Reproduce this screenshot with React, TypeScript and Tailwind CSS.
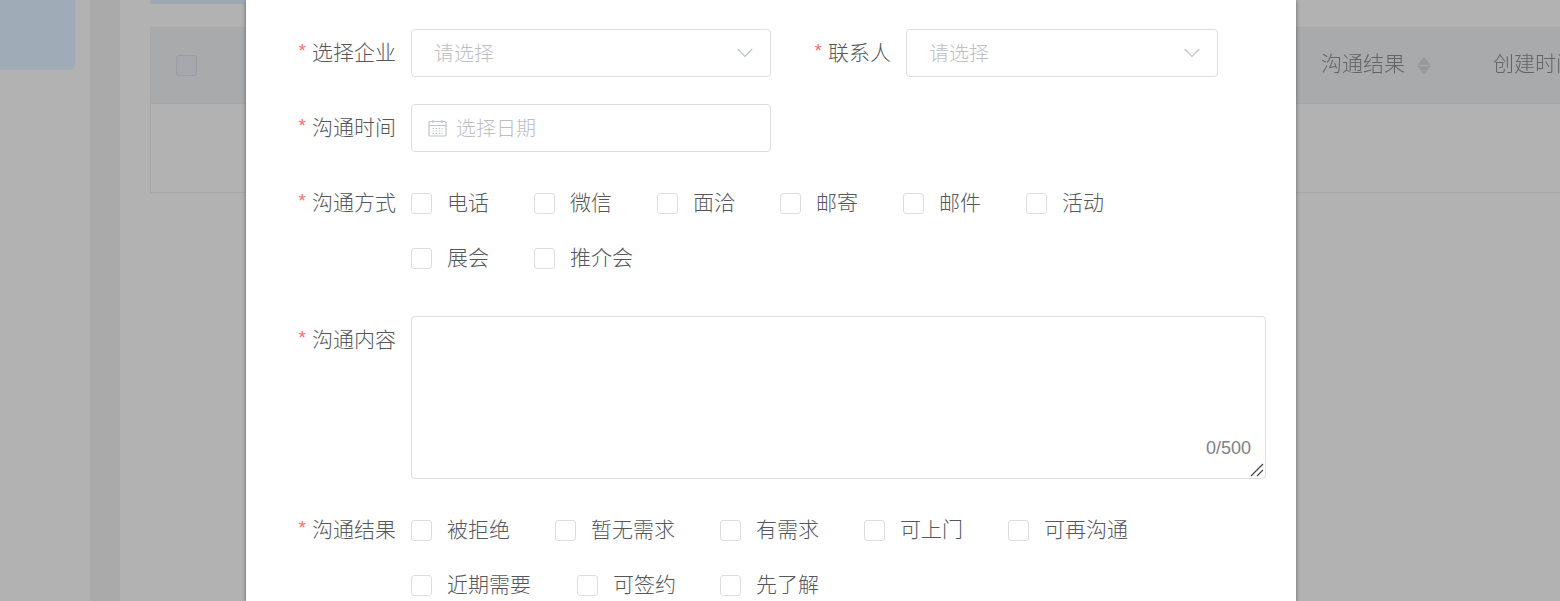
import React from "react";

const font = { fontFamily: '"Noto Sans CJK SC", "Noto Sans", sans-serif' };

const Label: React.FC<{ text: string; className?: string }> = ({ text, className }) => (
  <label className={`flex h-12 shrink-0 items-center justify-end pb-[3px] text-[21px] font-light text-[#55575b] ${className ?? "w-[150px]"}`}>
    <span className="mr-[6px] font-['Liberation_Sans',sans-serif] text-[19px] text-[#f56c6c]">*</span>
    {text}
  </label>
);

const Check: React.FC<{ text: string; width: number }> = ({ text, width }) => (
  <div className="flex h-[55px] items-center" style={{ width }}>
    <span className="h-[21px] w-[21px] shrink-0 rounded-[3px] border border-[#dcdde0] bg-white" />
    <span className="ml-[15px] pb-[4px] text-[21px] font-light whitespace-nowrap text-[#55575b]">{text}</span>
  </div>
);

const Select: React.FC<{ className: string }> = ({ className }) => (
  <div className={`flex h-12 items-center justify-between rounded-[4px] border border-[#dcdde0] bg-white pr-[17px] pl-[22px] ${className}`}>
    <span className="text-[20px] font-light text-[#bcbec2]">请选择</span>
    <svg width="16" height="10" viewBox="0 0 16 10" fill="none" stroke="#c0c4cc" strokeWidth="1.2">
      <path d="M.8 1l7.2 7.5L15.200 1" />
    </svg>
  </div>
);

const Background: React.FC = () => (
  <div className="-m-1 flex h-[609px] w-[1568px] overflow-hidden bg-[#b2b2b2] pt-1 pl-1 blur-[0.7px]">
    <div className="-mt-1 -ml-1 h-[74px] w-[79px] shrink-0 rounded-br-[5px] bg-[#a0abb8]" />
    <div className="-mt-1 ml-[15px] h-[609px] w-[30px] shrink-0 bg-[#aaaaaa]" />
    <div className="ml-[30px] flex w-[1444px] shrink-0 flex-col">
      <div className="-mt-1 h-[8px] w-[100px] bg-[#9fa9b6]" />
      <div className="mt-[23px] h-[166px] border border-r-0 border-[#a7a7a7]">
        <div className="flex h-[76px] items-center border-b border-[#a6a6a6] bg-[#a9aaac]">
          <span className="ml-[25px] h-[21px] w-[21px] shrink-0 rounded-[3px] border border-[#9a9ca3] bg-[#a6a8ae]" />
          <span className="ml-[1124px] flex shrink-0 items-center text-[21px] font-light whitespace-nowrap text-[#646466]">
            <span className="pb-[5px]">沟通结果</span>
            <span className="ml-[12px] flex flex-col gap-[1px]">
              <span className="h-0 w-0 border-x-[7px] border-b-[8px] border-x-transparent border-b-[#98999b]" />
              <span className="h-0 w-0 border-x-[7px] border-t-[8px] border-x-transparent border-t-[#98999b]" />
            </span>
          </span>
          <span className="ml-[62px] shrink-0 pb-[5px] text-[21px] font-light whitespace-nowrap text-[#646466]">创建时间</span>
        </div>
      </div>
    </div>
  </div>
);

const App: React.FC = () => (
  <div className="relative h-[601px] w-[1560px] overflow-hidden" style={font}>
    <Background />
    <div className="absolute top-0 left-[246px] h-[601px] w-[1050px] bg-white pt-[29px] shadow-[0_1px_4px_rgba(0,0,0,0.45)]">
      <div className="flex">
        <Label text="选择企业" />
        <Select className="ml-[15px] w-[360px]" />
        <Label text="联系人" className="ml-[43px] w-[77px]" />
        <Select className="ml-[15px] w-[312px]" />
      </div>
      <div className="mt-[27px] flex">
        <Label text="沟通时间" />
        <div className="ml-[15px] flex h-12 w-[360px] items-center rounded-[4px] border border-[#dcdde0] bg-white pl-[16px]">
          <svg width="19" height="18" viewBox="0 0 19 18" fill="none" stroke="#c0c4cc" strokeWidth="1.2">
            <rect x="1" y="2.500" width="17" height="14.500" rx="1" />
            <path d="M1 6.500h17M5 1v3M14 1v3" />
            <path d="M4.500 9.500h10M4.500 12h10M4.500 14.500h10" strokeDasharray="1.600 1.400" />
          </svg>
          <span className="ml-[9px] text-[20px] font-light text-[#bcbec2]">选择日期</span>
        </div>
      </div>
      <div className="mt-[24px] flex">
        <Label text="沟通方式" className="mt-[3px] w-[150px]" />
        <div className="ml-[15px] flex w-[855px] flex-wrap">
          {["电话", "微信", "面洽", "邮寄", "邮件", "活动"].map((t) => (
            <Check key={t} text={t} width={123} />
          ))}
          <Check text="展会" width={123} />
          <Check text="推介会" width={123} />
        </div>
      </div>
      <div className="mt-[30px] flex">
        <Label text="沟通内容" />
        <div className="relative ml-[15px] h-[163px] w-[855px] rounded-[4px] border border-[#dcdde0] bg-white">
          <span className="absolute right-[14px] bottom-[16px] font-['Liberation_Sans',sans-serif] text-[18px] text-[#7f8185]">
            0/500
          </span>
          <svg className="absolute right-[1px] bottom-[1px]" width="14" height="14" viewBox="0 0 14 14" stroke="#444" strokeWidth="1.2">
            <path d="M1 13L13 1M7 13l6-6" />
          </svg>
        </div>
      </div>
      <div className="mt-[24px] flex">
        <Label text="沟通结果" className="mt-[3px] w-[150px]" />
        <div className="ml-[15px] flex w-[855px] flex-wrap">
          <Check text="被拒绝" width={144} />
          <Check text="暂无需求" width={165} />
          <Check text="有需求" width={144} />
          <Check text="可上门" width={144} />
          <Check text="可再沟通" width={258} />
          <Check text="近期需要" width={166} />
          <Check text="可签约" width={143} />
          <Check text="先了解" width={144} />
        </div>
      </div>
    </div>
  </div>
);

export default App;
